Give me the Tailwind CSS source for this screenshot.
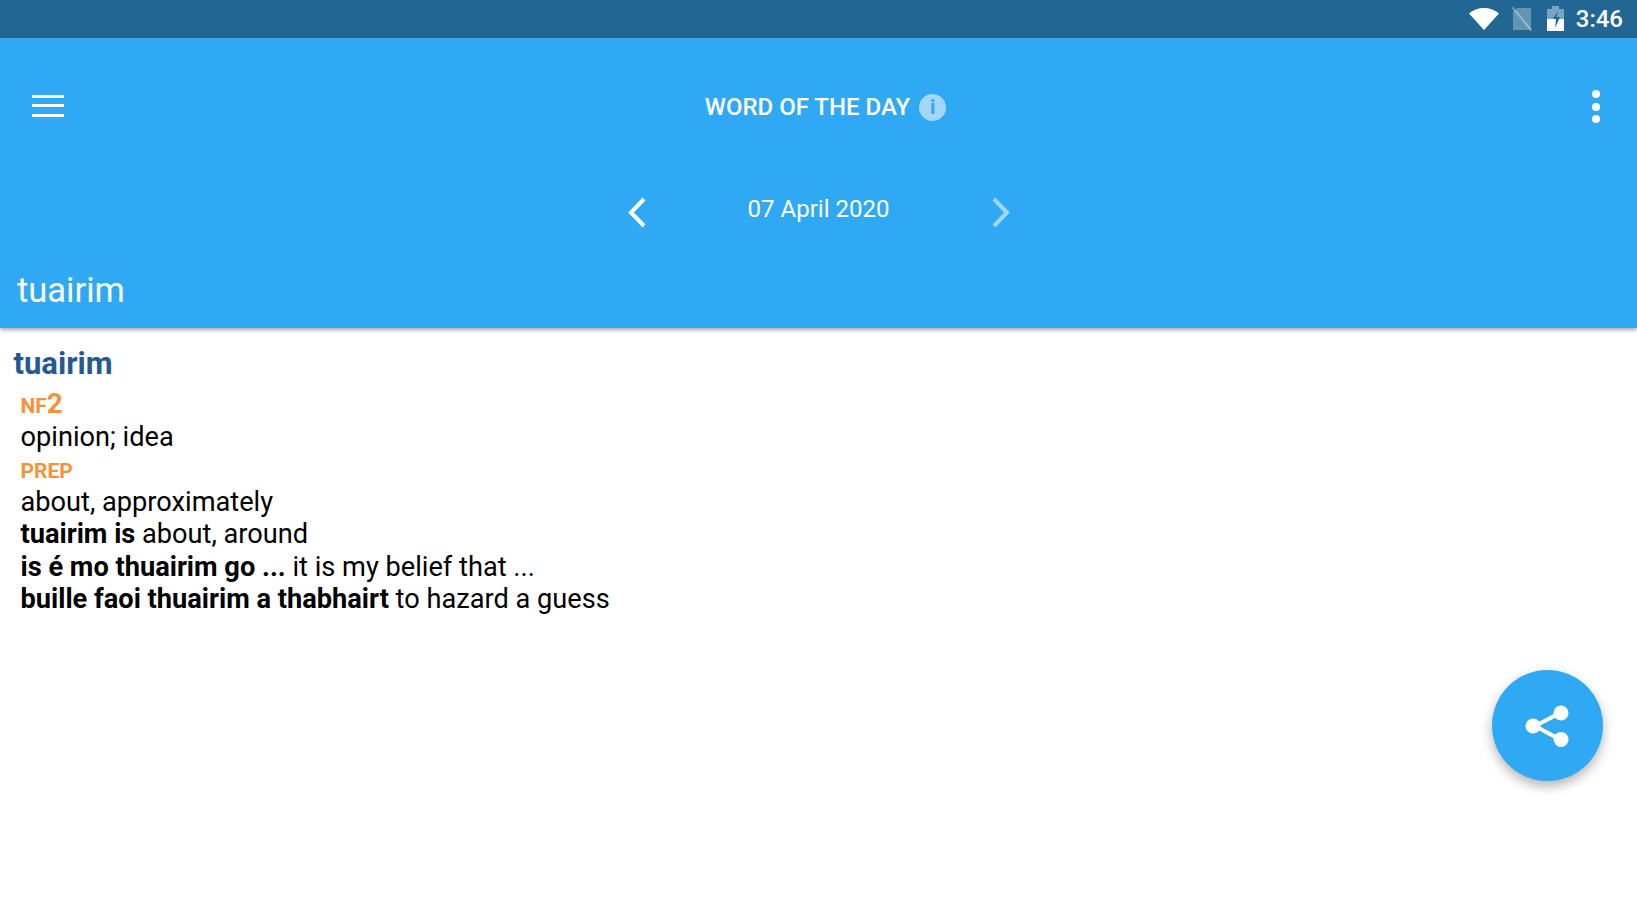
<!DOCTYPE html>
<html lang="en">
  <head>
    <meta charset="UTF-8" />
    <title>Word of the Day</title>
    <script src="https://cdn.jsdelivr.net/npm/@tailwindcss/browser@4"></script>
  </head>
  <body class="bg-white h-[915px] overflow-hidden font-['Roboto',sans-serif]">
    <!-- Status bar -->
    <div class="h-[38px] bg-[#226694] flex items-center justify-end text-white">
      <svg class="w-[30px] h-[24px] mr-[13px]" viewBox="0 0 30 24"><path d="M0 6.500C4 3 9 1 15 1s11 2 15 5.500L15 23z" fill="#fff"/></svg>
      <svg class="w-[20px] h-[24px] mr-[15px]" viewBox="0 0 20 24" fill="none"><path d="M5 1h14v22H1V5z" fill="#fff" fill-opacity=".3"/><path d="M0 0l20 24" stroke="#fff" stroke-opacity=".35" stroke-width="2"/></svg>
      <svg class="w-[17px] h-[26px] mr-[12px]" viewBox="0 0 17 26">
        <path d="M5 0h7v3h5v11H0V3h5z" fill="#fff" fill-opacity=".4"/>
        <path d="M0 13h17v12H0z" fill="#fff"/>
        <path d="M11 5l-5 8h3l-1 9 5-11H9.500z" fill="#226694"/>
      </svg>
      <span class="text-[24px] font-medium mr-[14px] leading-none">3:46</span>
    </div>

    <!-- App header -->
    <div class="bg-[#30a9f4] h-[290px] shadow-[0_2px_4px_rgba(0,0,0,0.35)] relative text-white flex flex-col">
      <div class="h-[69px] mt-[1px] pt-[33px] flex items-center justify-between pl-[32px] pr-[37px] box-content">
        <div class="w-[32px] flex flex-col gap-[6.500px] -mt-[2px]">
          <div class="h-[3px] bg-white"></div>
          <div class="h-[3px] bg-white"></div>
          <div class="h-[3px] bg-white"></div>
        </div>
        <div class="flex items-center -ml-[5px] mt-[1px]">
          <span class="text-[24px] font-medium leading-none">WORD OF THE DAY</span>
          <span class="ml-[9px] w-[27px] h-[27px] rounded-full bg-[#a3d7f9] flex items-center justify-center text-[#30a9f4] text-[20px] font-bold leading-none">i</span>
        </div>
        <div class="flex flex-col gap-[4.500px]">
          <div class="w-[8px] h-[8px] rounded-full bg-white"></div>
          <div class="w-[8px] h-[8px] rounded-full bg-white"></div>
          <div class="w-[8px] h-[8px] rounded-full bg-white"></div>
        </div>
      </div>
      <div class="mt-[51px] h-[40px] flex items-center justify-center">
        <svg class="w-[20px] h-[32px]" viewBox="0 0 20 32" fill="none"><path d="M17 3L4 16.500 17 30" stroke="#fff" stroke-width="4"/></svg>
        <span class="w-[344px] text-center text-[24px] leading-none -mt-[6px]">07 April 2020</span>
        <svg class="w-[20px] h-[32px]" viewBox="0 0 20 32" fill="none"><path d="M3 3l13 13.500L3 30" stroke="#a3d7f9" stroke-width="4"/></svg>
      </div>
      <div class="pl-[17px] mt-[41px] text-[34.500px] leading-none">tuairim</div>
    </div>

    <!-- Entry -->
    <div class="pt-[18px] text-black text-[27.200px] leading-[32.400px]">
      <div class="pl-[13.500px] text-[#235a95] text-[31px] font-bold leading-[36px]">tuairim</div>
      <div class="pl-[20.500px] mt-[7px]">
        <div class="text-[#f79239] font-bold leading-[30px]"><span class="text-[21px]">NF</span><span class="text-[28px]">2</span></div>
        <div>opinion; idea</div>
        <div class="text-[#f79239] text-[21px] font-bold pt-[4px] leading-[28.400px]">PREP</div>
        <div>about, approximately</div>
        <div><b>tuairim is</b> about, around</div>
        <div><b>is é mo thuairim go ...</b> it is my belief that ...</div>
        <div><b>buille faoi thuairim a thabhairt</b> to hazard a guess</div>
      </div>
    </div>

    <!-- Share button -->
    <button class="absolute left-[1492px] top-[670px] w-[111px] h-[111px] rounded-full bg-[#30a9f4] shadow-[0_5px_12px_rgba(0,0,0,0.3)] flex items-center justify-center">
      <svg class="w-[46px] h-[42px]" viewBox="0 0 46 42" fill="none">
        <path d="M35 8L10 21l25 13.500" stroke="#fff" stroke-width="4"/>
        <circle cx="36" cy="8" r="7.500" fill="#fff"/>
        <circle cx="8" cy="21" r="7.500" fill="#fff"/>
        <circle cx="36" cy="34.500" r="7.500" fill="#fff"/>
      </svg>
    </button>
  </body>
</html>
